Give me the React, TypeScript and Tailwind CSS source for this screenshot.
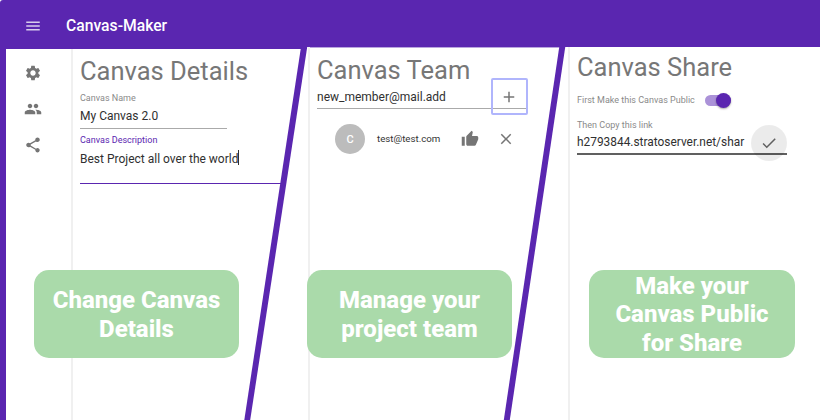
import type { ReactNode } from "react";
import {
  MdAdd,
  MdCheck,
  MdClose,
  MdMenu,
  MdPeople,
  MdSettings,
  MdShare,
  MdThumbUp,
} from "react-icons/md";

function Title({ children }: { children: ReactNode }) {
  return (
    <h2 className="h-[30px] text-[25.5px] leading-[31px] font-normal whitespace-nowrap text-[#777777]">
      {children}
    </h2>
  );
}

function Caption({ children, wide = false }: { children: ReactNode; wide?: boolean }) {
  return (
    <div
      className={`flex h-[88px] shrink-0 items-center justify-center rounded-[15px] bg-[#aadaaa] pt-px text-center text-[24px] font-extrabold whitespace-nowrap text-white ${
        wide ? "w-[206px] leading-[28.5px]" : "w-[205px] leading-[29px]"
      }`}
    >
      <p>{children}</p>
    </div>
  );
}

function Dividers() {
  return (
    <svg
      className="pointer-events-none absolute inset-0"
      width="820"
      height="420"
      viewBox="0 0 820 420"
      fill="#5a26b0"
      aria-hidden="true"
    >
      <polygon points="301,47 307.2,47 250.2,420 244.3,420" />
      <polygon points="559.4,46 565.4,46 509.8,420 503.8,420" />
    </svg>
  );
}

export default function App() {
  return (
    <div className="relative flex h-[420px] w-[820px] flex-col overflow-hidden rounded-tl-[3px] bg-[#5a26b0] font-['Roboto',sans-serif]">
      <header className="flex h-[47px] shrink-0 items-center gap-[24px] pt-1 pl-6 text-white">
        <MdMenu size={18} className="text-[#d8ccec]" />
        <h1 className="text-[15.7px] leading-5 font-medium">Canvas-Maker</h1>
      </header>

      <main className="flex min-h-0 flex-1 pl-[6px]">
        <section className="flex w-[301px] shrink-0 flex-col">
          <div className="h-[2px] shrink-0 bg-[#5a26b0]" />
          <div className="flex min-h-0 flex-1 bg-white">
            <nav className="flex w-[67px] shrink-0 flex-col items-center gap-[18px] border-r-2 border-[#f0f0f0] pt-[15px] pr-[11px] text-[#757575]">
              <MdSettings size={18} />
              <MdPeople size={18} />
              <MdShare size={18} />
            </nav>
            <div className="flex min-w-0 flex-1 flex-col pt-[7px] pl-[7px]">
              <Title>Canvas Details</Title>
              <label className="mt-[6px] text-[9px] leading-3 text-[#8a8a8a]">
                Canvas Name
              </label>
              <div className="h-[25px] w-[147px] border-b border-[#aaaaaa] pt-1 text-[12px] leading-4 text-[#303030]">
                My Canvas 2.0
              </div>
              <label className="mt-[5px] text-[9px] leading-3 text-[#5a26b0]">
                Canvas Description
              </label>
              <div className="flex h-[38px] w-[203px] items-start border-b border-[#5a26b0] pt-[5px] text-[12px] leading-4 whitespace-nowrap text-[#303030]">
                Best Project all over the world
                <span className="-mt-px h-[15px] w-px bg-[#303030]" />
              </div>
              <div className="-ml-[46px] mt-auto pb-[62px]">
                <Caption>
                  Change Canvas
                  <br />
                  Details
                </Caption>
              </div>
            </div>
          </div>
        </section>

        <section className="flex w-[258px] shrink-0 bg-white">
          <div className="ml-px w-[2px] bg-[#f0f0f0]" />
          <div className="flex flex-1 flex-col border-t border-[#b9a5de] pt-[7px] pl-[7px]">
            <Title>Canvas Team</Title>
            <div className="-mt-[6px] flex h-[37px] w-[211px]">
              <div className="flex h-[30px] w-full items-end justify-between border-b border-[#aaaaaa]">
                <span className="pb-[3px] text-[12px] leading-4 text-[#303030]">
                  new_member@mail.add
                </span>
                <button className="-mb-[7px] flex size-[37px] items-center justify-center rounded-[2px] border-2 border-[#b0b5fc] pr-px text-[#757575]">
                  <MdAdd size={18} />
                </button>
              </div>
            </div>
            <div className="mt-[8px] flex h-[30px] items-center pl-[18px] text-[#757575]">
              <span className="flex size-[30px] items-center justify-center rounded-full bg-[#bcbcbc] pt-0.5 text-[11px] font-medium text-white">
                C
              </span>
              <span className="ml-[12px] w-[84px] text-[9.7px] leading-3 text-[#333333]">
                test@test.com
              </span>
              <MdThumbUp size={18} />
              <MdClose size={18} className="ml-[18px]" />
            </div>
            <div className="-ml-[10px] mt-auto pb-[62px]">
              <Caption>
                Manage your
                <br />
                project team
              </Caption>
            </div>
          </div>
        </section>

        <section className="flex min-w-0 flex-1 bg-white">
          <div className="ml-[3px] w-[2px] bg-[#f0f0f0]" />
          <div className="flex flex-1 flex-col pt-[5px] pl-[7px]">
            <Title>Canvas Share</Title>
            <div className="mt-[10px] flex h-4 items-center gap-[10px]">
              <span className="text-[9px] leading-3 text-[#8a8a8a]">
                First Make this Canvas Public
              </span>
              <span className="flex h-[11px] w-[26px] items-center justify-end rounded-full bg-[#ab92d8]">
                <span className="size-[15px] shrink-0 rounded-full bg-[#5a26b0] shadow-[0_1px_2px_rgba(0,0,0,0.35)]" />
              </span>
            </div>
            <label className="mt-[11px] text-[9px] leading-3 text-[#8a8a8a]">
              Then Copy this link
            </label>
            <div className="flex h-[24px] w-[210px] items-end justify-between border-b-2 border-[#606060]">
              <span className="pb-[3px] text-[11.9px] leading-4 whitespace-nowrap text-[#303030]">
                h2793844.stratoserver.net/shar
              </span>
              <button className="-mb-[8px] flex size-[36px] shrink-0 items-center justify-center rounded-full bg-black/8 text-[#606060]">
                <MdCheck size={18} />
              </button>
            </div>
            <div className="ml-[12px] mt-auto pb-[62px]">
              <Caption wide>
                Make your
                <br />
                Canvas Public
                <br />
                for Share
              </Caption>
            </div>
          </div>
        </section>
      </main>
      <Dividers />
    </div>
  );
}
